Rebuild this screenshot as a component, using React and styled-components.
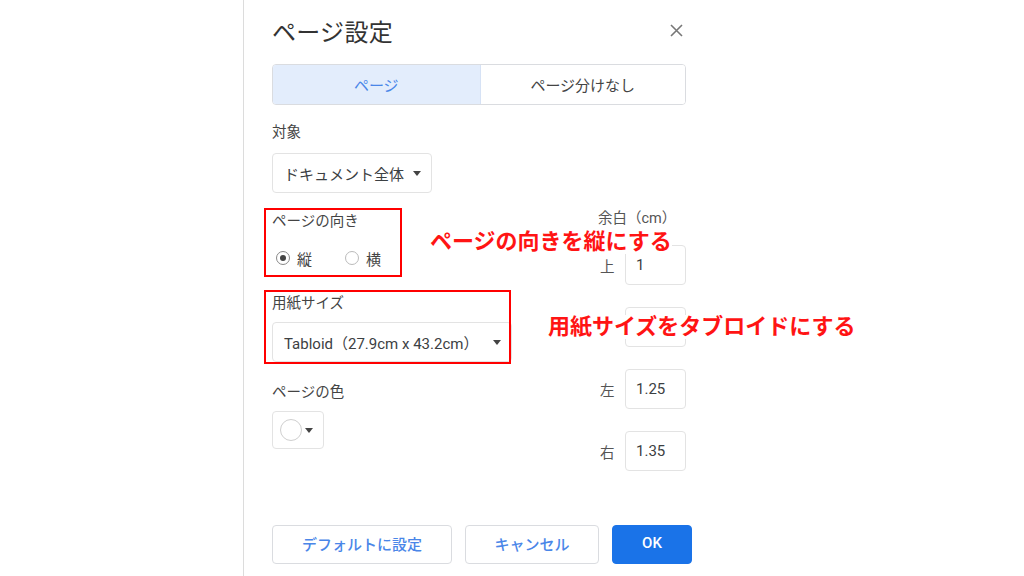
import React from "react";
import styled, { createGlobalStyle } from "styled-components";

//global//
const GlobalStyle = createGlobalStyle`
  body {
    margin: 0;
    background: #fff;
    font-family: Roboto, "Noto Sans CJK JP", sans-serif;
    color: #3c4043;
  }
`;

//layout//
const Page = styled.div`
  display: flex;
  height: 576px;
  padding-left: 243px;
  box-sizing: border-box;
  overflow: hidden;
`;

const Dialog = styled.div`
  display: flex;
  flex-direction: column;
  width: 460px;
  border-left: 1.5px solid #dcdcdc;
  padding-left: 28px;
  padding-bottom: 12px;
  box-sizing: border-box;
`;

const Header = styled.div`
  display: flex;
  align-items: center;
  justify-content: space-between;
  width: 414px;
  height: 60px;
`;

const Title = styled.h1`
  margin: 0;
  font-size: 24px;
  font-weight: 400;
  color: #333;
  letter-spacing: 0.3px;
`;

const Close = styled.button`
  display: flex;
  align-items: center;
  justify-content: center;
  width: 20px;
  height: 20px;
  padding: 0;
  border: none;
  background: none;
  color: #777;
`;

//tabs//
const Tabs = styled.div`
  display: flex;
  width: 414px;
  height: 41px;
  margin-top: 4px;
  border: 1px solid #dadce0;
  border-radius: 4px;
  box-sizing: border-box;
  overflow: hidden;
`;

const Tab = styled.div`
  display: flex;
  align-items: center;
  justify-content: center;
  width: ${(props) => props.$width};
  font-size: 15px;
  color: ${(props) => (props.$active ? "#4a86e8" : "#444")};
  background: ${(props) => (props.$active ? "#e3edfc" : "#fff")};
  border-right: ${(props) => (props.$active ? "1px solid #d6e2f5" : "none")};
`;

//body//
const Body = styled.div`
  position: relative;
  display: flex;
  gap: 86px;
`;

const LeftCol = styled.div`
  display: flex;
  flex-direction: column;
  width: 240px;
`;

const Label = styled.div`
  font-size: 14.5px;
  line-height: 20px;
  color: #444;
  margin-top: ${(props) => props.$top || "0px"};
`;

const Section = styled.div`
  position: relative;
  display: flex;
  flex-direction: column;
  margin-top: ${(props) => props.$top};
`;

const Mark = styled.div`
  position: absolute;
  left: -8px;
  top: -4px;
  width: ${(props) => props.$w}px;
  height: ${(props) => props.$h}px;
  border: 2px solid #ff0000;
  box-sizing: border-box;
  pointer-events: none;
`;

const Select = styled.div`
  display: flex;
  align-items: center;
  justify-content: space-between;
  width: ${(props) => props.$width}px;
  height: ${(props) => props.$height || 40}px;
  margin-top: ${(props) => props.$top}px;
  padding: 0 10px 0 ${(props) => props.$pad || 11}px;
  border: 1px solid #e3e3e3;
  border-radius: 4px;
  box-sizing: border-box;
  font-size: 15px;
  color: #3c4043;
`;

const Caret = styled.span`
  width: 0;
  height: 0;
  border-left: 4px solid transparent;
  border-right: 4px solid transparent;
  border-top: 5px solid #444;
`;

const Swatch = styled.span`
  width: 22px;
  height: 22px;
  border: 1px solid #cfcfcf;
  border-radius: 50%;
  box-sizing: border-box;
`;

const RadioRow = styled.div`
  display: flex;
  align-items: center;
  height: 20px;
  margin-top: 16px;
  padding-left: 4px;
  gap: 33px;
`;

const RadioItem = styled.label`
  display: flex;
  align-items: center;
  gap: 7px;
  font-size: 15px;
  color: #444;
`;

const Radio = styled.span`
  display: flex;
  align-items: center;
  justify-content: center;
  width: 14px;
  height: 14px;
  border: 1px solid ${(props) => (props.$checked ? "#888" : "#bbb")};
  border-radius: 50%;
  box-sizing: border-box;

  &::after {
    content: "";
    display: ${(props) => (props.$checked ? "block" : "none")};
    width: 6px;
    height: 6px;
    border-radius: 50%;
    background: #444;
  }
`;

//margins//
const RightCol = styled.div`
  display: flex;
  flex-direction: column;
  width: 88px;
  padding-top: 104px;
`;

const MarginTitle = styled.div`
  font-size: 14.5px;
  line-height: 20px;
  color: #555;
  margin-bottom: 16px;
  white-space: nowrap;
`;

const MarginList = styled.div`
  display: flex;
  flex-direction: column;
  gap: 22px;
`;

const MarginRow = styled.div`
  display: flex;
  align-items: center;
  gap: 10px;
  padding-left: 2px;
`;

const Side = styled.span`
  width: 15px;
  font-size: 14.5px;
  color: #555;
`;

const Input = styled.div`
  display: flex;
  align-items: center;
  width: 61px;
  height: 40px;
  padding-left: 10px;
  border: 1px solid #e3e3e3;
  border-radius: 4px;
  box-sizing: border-box;
  font-size: 15px;
  color: #3c4043;
`;

//annotations//
const Note = styled.div`
  position: absolute;
  left: ${(props) => props.$x}px;
  top: ${(props) => props.$y}px;
  font-size: 22px;
  font-weight: 700;
  line-height: 24px;
  color: #ff1414;
  background: #fff;
  white-space: nowrap;
`;

//footer//
const Footer = styled.div`
  display: flex;
  gap: 13px;
  margin-top: auto;
`;

const Button = styled.button`
  height: 39px;
  width: ${(props) => props.$width}px;
  padding: 0 0 3px;
  border: 1px solid ${(props) => (props.$primary ? "#1a73e8" : "#dadce0")};
  border-radius: 4px;
  background: ${(props) => (props.$primary ? "#1a73e8" : "#fff")};
  color: ${(props) => (props.$primary ? "#fff" : "#4a86e8")};
  font-family: Roboto, "Noto Sans CJK JP", sans-serif;
  font-size: 15px;
  font-weight: 500;
`;

const margins = [
  { side: "上", value: "1" },
  { side: "下", value: "" },
  { side: "左", value: "1.25" },
  { side: "右", value: "1.35" },
];

const App = () => {
  return (
    <Page>
      <GlobalStyle />
      <Dialog>
        <Header>
          <Title>ページ設定</Title>
          <Close>
            <svg width="13" height="13" viewBox="0 0 13 13">
              <path d="M1 1L12 12M12 1L1 12" stroke="currentColor" strokeWidth="1.6" />
            </svg>
          </Close>
        </Header>

        <Tabs>
          <Tab $active $width="208px">
            ページ
          </Tab>
          <Tab $width="206px">ページ分けなし</Tab>
        </Tabs>

        <Body>
          <LeftCol>
            <Label $top="18px">対象</Label>
            <Select $width={160} $top={10}>
              ドキュメント全体
              <Caret />
            </Select>

            <Section $top="19px">
              <Label>ページの向き</Label>
              <RadioRow>
                <RadioItem>
                  <Radio $checked />縦
                </RadioItem>
                <RadioItem>
                  <Radio />横
                </RadioItem>
              </RadioRow>
              <Mark $w={138} $h={69} />
            </Section>

            <Section $top="26px">
              <Label>用紙サイズ</Label>
              <Select $width={240} $top={8}>
                Tabloid（27.9cm x 43.2cm）
                <Caret />
              </Select>
              <Mark $w={247} $h={74} />
            </Section>

            <Label $top="21px">ページの色</Label>
            <Select $width={52} $height={38} $top={8} $pad={7}>
              <Swatch />
              <Caret />
            </Select>
          </LeftCol>

          <RightCol>
            <MarginTitle>余白（cm）</MarginTitle>
            <MarginList>
              {margins.map((item) => (
                <MarginRow key={item.side}>
                  <Side>{item.side}</Side>
                  <Input>{item.value}</Input>
                </MarginRow>
              ))}
            </MarginList>
          </RightCol>

          <Note $x={158} $y={125}>
            ページの向きを縦にする
          </Note>
          <Note $x={276} $y={210}>
            用紙サイズをタブロイドにする
          </Note>
        </Body>

        <Footer>
          <Button $width={180}>デフォルトに設定</Button>
          <Button $width={134}>キャンセル</Button>
          <Button $primary $width={80}>
            OK
          </Button>
        </Footer>
      </Dialog>
    </Page>
  );
};

export default App;
